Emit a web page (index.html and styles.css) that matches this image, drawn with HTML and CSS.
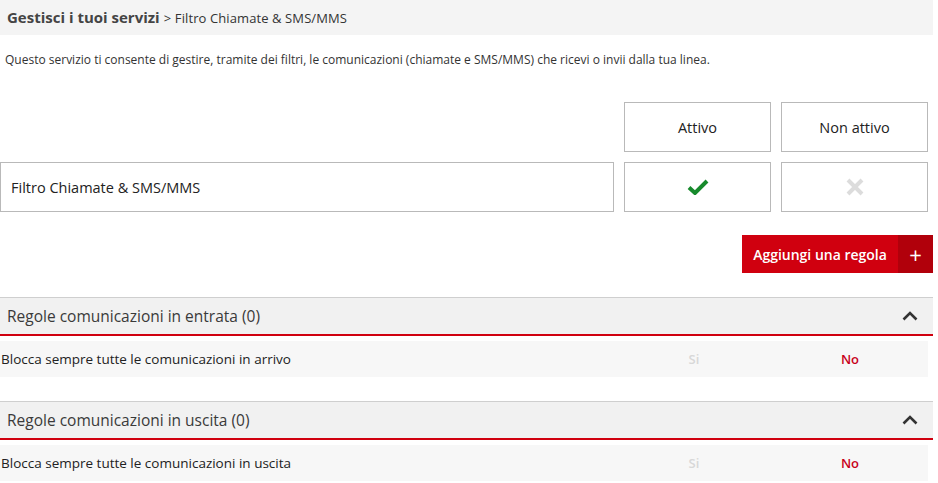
FILE: index.html
```html
<!DOCTYPE html>
<html lang="it">
<head>
<meta charset="UTF-8">
<meta name="viewport" content="width=device-width, initial-scale=1.0">
<title>Filtro Chiamate &amp; SMS/MMS</title>
<link rel="stylesheet" href="styles.css">
</head>
<body>
  <div class="page">
    <div class="crumbs">
      <span class="crumb-main">Gestisci i tuoi servizi</span>
      <span class="crumb-sub">&gt; Filtro Chiamate &amp; SMS/MMS</span>
    </div>

    <p class="intro">Questo servizio ti consente di gestire, tramite dei filtri, le comunicazioni (chiamate e SMS/MMS) che ricevi o invii dalla tua linea.</p>

    <div class="status-grid">
      <div class="spacer"></div>
      <div class="box head">Attivo</div>
      <div class="box head">Non attivo</div>

      <div class="box name">Filtro Chiamate &amp; SMS/MMS</div>
      <div class="box">
        <svg width="22" height="16" viewBox="0 0 22 16"><path d="M2 8.5 L8 14 L20 2" fill="none" stroke="#178a2c" stroke-width="4"/></svg>
      </div>
      <div class="box">
        <svg width="18" height="18" viewBox="0 0 18 18"><path d="M2 2 L16 16 M16 2 L2 16" fill="none" stroke="#dcdcdc" stroke-width="4"/></svg>
      </div>
    </div>

    <div class="actions">
      <a href="#" class="btn-add">
        <span class="btn-label">Aggiungi una regola</span>
        <span class="btn-plus">+</span>
      </a>
    </div>

    <div class="section">
      <div class="section-head">
        <span>Regole comunicazioni in entrata (0)</span>
        <svg width="16" height="10" viewBox="0 0 16 10"><path d="M1.5 8.5 L8 2 L14.5 8.5" fill="none" stroke="#333" stroke-width="2.6"/></svg>
      </div>
      <div class="rule-row">
        <span class="rule-text">Blocca sempre tutte le comunicazioni in arrivo</span>
        <span class="opt-off">Si</span>
        <span class="opt-on">No</span>
      </div>
    </div>

    <div class="section">
      <div class="section-head">
        <span>Regole comunicazioni in uscita (0)</span>
        <svg width="16" height="10" viewBox="0 0 16 10"><path d="M1.5 8.5 L8 2 L14.5 8.5" fill="none" stroke="#333" stroke-width="2.6"/></svg>
      </div>
      <div class="rule-row">
        <span class="rule-text">Blocca sempre tutte le comunicazioni in uscita</span>
        <span class="opt-off">Si</span>
        <span class="opt-on">No</span>
      </div>
    </div>
  </div>
</body>
</html>
```

FILE: styles.css
```css
body {
  margin: 0;
  font-family: "Open Sans", Arial, sans-serif;
  color: #333;
  background: #fff;
}

.page {
  width: 933px;
}

/* breadcrumb bar */
.crumbs {
  height: 35px;
  line-height: 35px;
  background-color: #f4f4f4;
  padding-left: 7px;
}

.crumb-main {
  font-size: 15px;
  font-weight: bold;
  color: #444;
}

.crumb-sub {
  font-size: 13px;
  color: #333;
  letter-spacing: 0.1px;
}

.intro {
  margin: 16px 0 0 5px;
  font-size: 12px;
  line-height: 18px;
  color: #333;
}

/* active / not active table */
.status-grid {
  display: grid;
  grid-template-columns: 614px 147px 147px;
  grid-auto-rows: 50px;
  gap: 10px;
  margin-top: 33px;
}

.box {
  border: 1px solid #b9b9b9;
  display: flex;
  align-items: center;
  justify-content: center;
  font-size: 14.5px;
  color: #222;
}

.box.name {
  justify-content: flex-start;
  padding-left: 10px;
}

/* add rule button */
.actions {
  display: flex;
  justify-content: flex-end;
  margin-top: 23px;
}

.btn-add {
  display: flex;
  height: 38px;
  text-decoration: none;
  color: #fff;
  font-size: 14px;
  font-weight: 600;
}

.btn-label {
  background-color: #d0000f;
  width: 156px;
  display: flex;
  align-items: center;
  justify-content: center;
}

.btn-plus {
  background-color: #b1000b;
  width: 35px;
  display: flex;
  align-items: center;
  justify-content: center;
  font-size: 22px;
  font-weight: normal;
}

/* rule sections */
.section {
  margin-top: 24px;
}

.section-head {
  height: 36px;
  border-top: 1px solid #cfcfcf;
  border-bottom: 2px solid #d0000f;
  background-color: #f1f1f1;
  display: flex;
  align-items: center;
  justify-content: space-between;
  padding: 0 15px 0 7px;
  font-size: 15.5px;
  color: #3a3a3a;
}

.rule-row {
  margin-top: 5px;
  width: 928px;
  height: 36px;
  background-color: #f7f7f7;
  display: grid;
  grid-template-columns: 1fr 156px 156px;
  align-items: center;
  font-size: 13.5px;
}

.rule-text {
  padding-left: 1px;
  color: #222;
}

.opt-off,
.opt-on {
  text-align: center;
  font-size: 13px;
  font-weight: 600;
}

.opt-off {
  color: #d8d8d8;
}

.opt-on {
  color: #c8001a;
}
```
